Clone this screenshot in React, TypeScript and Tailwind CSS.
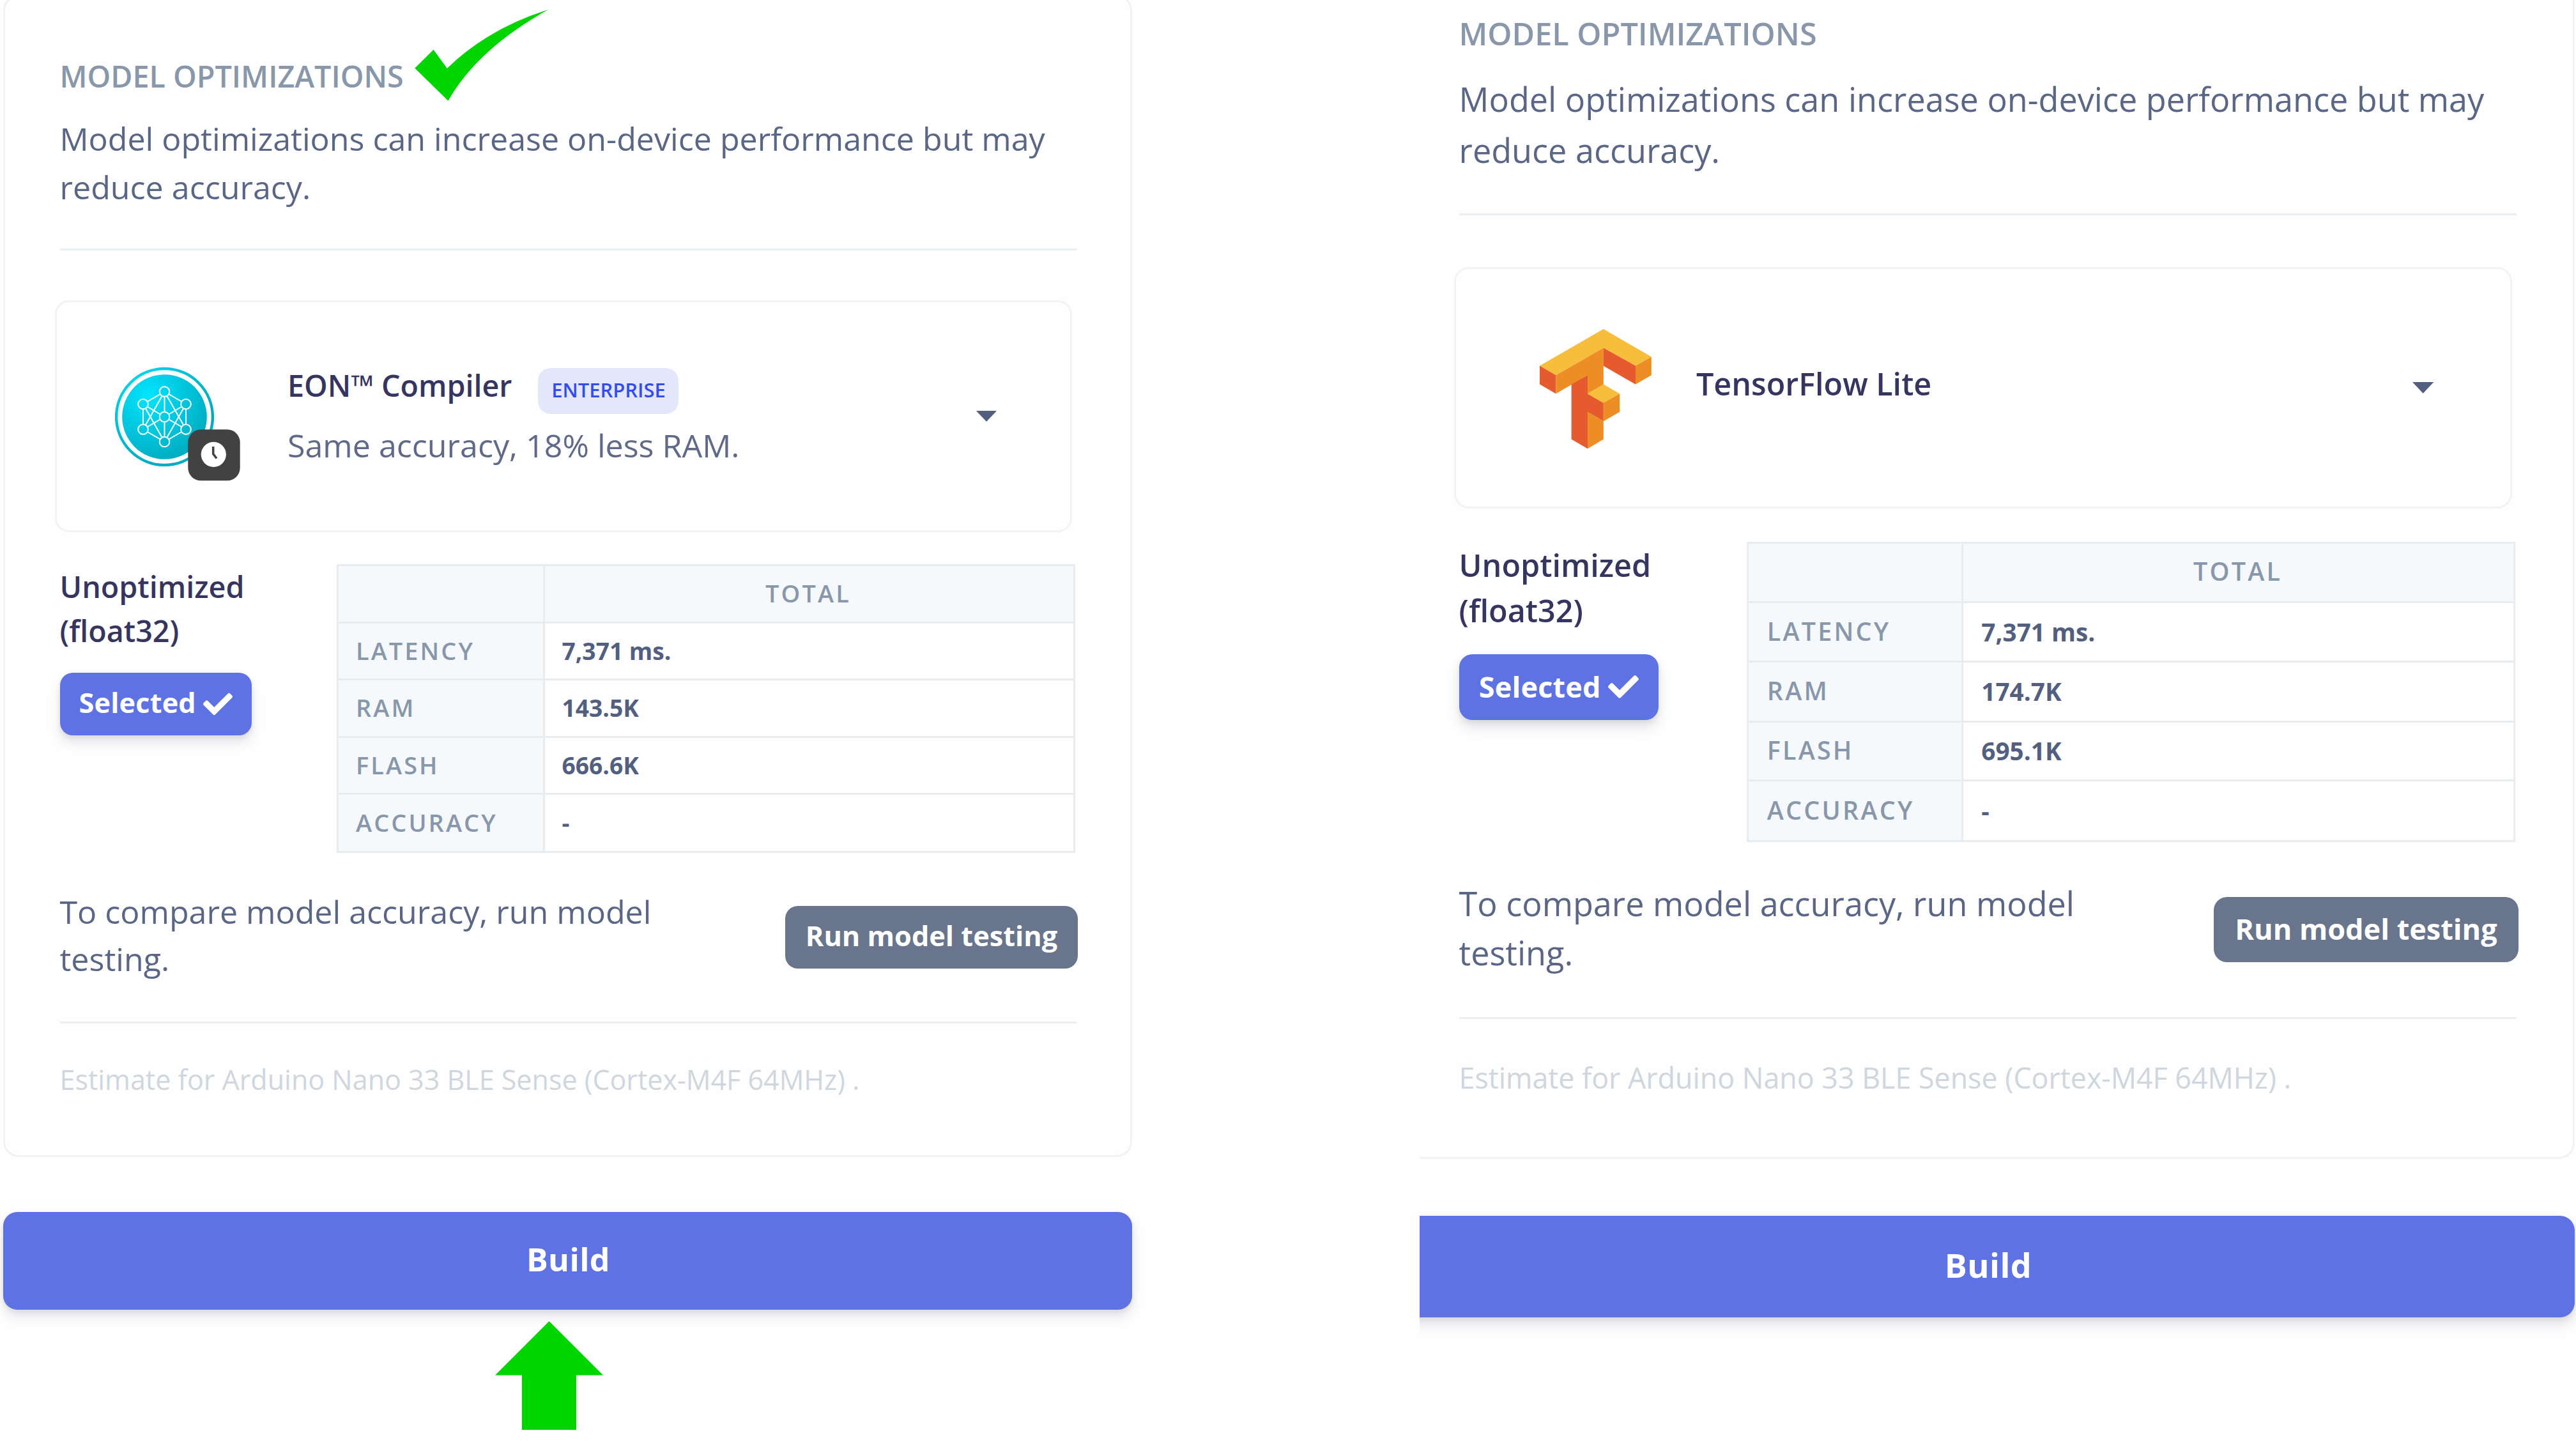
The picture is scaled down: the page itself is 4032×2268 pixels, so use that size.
import React from "react";
import { FaCheck } from "react-icons/fa";

type Row = [label: string, value: string, height: string];

function Check() {
  return (
    <svg className="absolute left-[649px] top-[23px] h-[143px] w-[210px]" viewBox="649 15 210 143">
      <path d="M858.2 15Q763 45 699.8 107L678.5 77.7L649.3 106.7L701.5 157.7Q747 77 858.2 15Z" fill="#00d500" />
    </svg>
  );
}

function EonIcon() {
  const nodes = [
    [77.5, 38],
    [111, 57.5],
    [111, 97],
    [77.5, 116.5],
    [44, 97],
    [44, 57.5],
    [77.5, 77.5],
  ];
  const links = [
    [0, 1], [1, 2], [2, 3], [3, 4], [4, 5], [5, 0],
    [0, 6], [1, 6], [2, 6], [3, 6], [4, 6], [5, 6],
    [0, 2], [0, 4], [3, 1], [3, 5],
  ];
  return (
    <svg className="h-[179px] w-[197px]" viewBox="0 0 197 179">
      <defs>
        <radialGradient id="eon" gradientUnits="userSpaceOnUse" cx="52" cy="45" r="105">
          <stop offset="0" stopColor="#00e5ff" />
          <stop offset="1" stopColor="#00acc1" />
        </radialGradient>
        <mask id="links">
          <rect width="197" height="179" fill="#fff" />
          {nodes.map(([x, y], i) => (
            <circle key={i} cx={x} cy={y} r="7.6" fill="#000" />
          ))}
        </mask>
      </defs>
      <circle cx="77.5" cy="77.5" r="75.4" fill="none" stroke="url(#eon)" strokeWidth="4.4" />
      <circle cx="77.5" cy="77.5" r="66.3" fill="url(#eon)" />
      <g stroke="#fff" strokeWidth="2" fill="none">
        <g mask="url(#links)">
          {links.map(([a, b], i) => (
            <line key={i} x1={nodes[a][0]} y1={nodes[a][1]} x2={nodes[b][0]} y2={nodes[b][1]} />
          ))}
        </g>
        {nodes.map(([x, y], i) => (
          <circle key={i} cx={x} cy={y} r="7.8" />
        ))}
      </g>
      <rect x="114.3" y="97.3" width="81.4" height="80" rx="20" fill="#424242" />
      <circle cx="154.3" cy="136.3" r="19.6" fill="#fff" />
      <path d="M153.7 124V135.5L159 142.5" fill="none" stroke="#424242" strokeWidth="3.6" />
    </svg>
  );
}

function TensorFlowIcon() {
  return (
    <svg className="h-[180px] w-[168px]" viewBox="0 0 303 560" preserveAspectRatio="none">
      <path fill="#f7be3c" d="M0 172L173 0L303 130L260 172L173 88L44 216Z" />
      <path fill="#e55b2d" d="M0 172L44 216V303L0 259Z" />
      <path fill="#ed8e24" d="M44 216L173 88V260L130 303V216L44 303Z" />
      <path fill="#e55b2d" d="M173 88L260 172V259L173 173Z" />
      <path fill="#ed8e24" d="M260 172L303 130V216L260 259Z" />
      <path fill="#e55b2d" d="M86 259L130 216V303L173 345V431L130 389V560L86 516Z" />
      <path fill="#f7be3c" d="M130 303L173 259L217 303L173 345Z" />
      <path fill="#ed8e24" d="M173 345L217 303V388L173 431Z" />
      <path fill="#ed8e24" d="M130 389L173 431V516L130 560Z" />
    </svg>
  );
}

function CompilerCard({ children }: { children: React.ReactNode }) {
  return (
    <div className="-ml-[7.5px] mt-[78px] flex h-[363px] w-[1591.5px] items-center rounded-[22px] border-[3px] border-[#f3f3f3] pr-[115px]">
      {children}
      <svg className="ml-auto h-[17px] w-[32px]" viewBox="0 0 32 17">
        <path d="M0 0H32L16 17Z" fill="#525f7f" />
      </svg>
    </div>
  );
}

function MetricsTable({ rows }: { rows: Row[] }) {
  return (
    <div className="w-[1156px] border-l-[3px] border-t-[3px] border-[#e9ecef] text-[37.9px]">
      <div className="flex h-[90px] font-semibold tracking-[3.1px] text-[#8898aa]">
        <div className="w-[323px] border-b-[3px] border-r-[3px] border-[#e9ecef] bg-[#f6f9fc]" />
        <div className="flex flex-1 items-center justify-center border-b-[3px] border-r-[3px] border-[#e9ecef] bg-[#f6f9fc] pb-[3px] pr-[2px]">
          TOTAL
        </div>
      </div>
      {rows.map(([label, value, height]) => (
        <div key={label} className={`flex ${height}`}>
          <div className="flex w-[323px] items-center border-b-[3px] border-r-[3px] border-[#e9ecef] bg-[#f6f9fc] pb-[2px] pl-[27.5px] font-semibold tracking-[3.1px] text-[#8898aa]">
            {label}
          </div>
          <div className="flex flex-1 items-center border-b-[3px] border-r-[3px] border-[#e9ecef] pb-[1px] pl-[27px] text-[37.2px] font-bold text-[#525f7f]">
            {value}
          </div>
        </div>
      ))}
    </div>
  );
}

function Panel({ card, rows, marked }: { card: React.ReactNode; rows: Row[]; marked?: boolean }) {
  return (
    <div className="relative w-[1780px] pl-[5px]">
      <div className="-mt-[8px] h-[1819px] w-[1767px] rounded-[24px] border-[3px] border-[#f2f2f2] pl-[85.5px] pt-[88.5px]">
        <h2 className="text-[46.7px] font-semibold leading-[70px] text-[#8898aa]">MODEL OPTIMIZATIONS</h2>
        <p className="mt-[25.4px] text-[50.15px] leading-[76.6px] text-[#5a6685]">
          Model optimizations can increase on-device performance but may
          <br />
          reduce accuracy.
        </p>
        <div className="mt-[57px] h-[3px] w-[1591px] bg-[#e9eef2]" />
        {card}
        <div className="mt-[50px] flex h-[452px] w-[1589px] items-start justify-between">
          <div>
            <div className="pt-[1px] text-[46.65px] font-semibold leading-[68.5px] text-[#35355f]">
              Unoptimized
              <br />
              (float32)
            </div>
            <button className="mt-[31.5px] flex h-[98.5px] w-[300px] items-center rounded-[20px] bg-[#5e72e4] pb-[2px] pl-[30px] text-left text-[43.2px] font-bold tracking-[0.2px] text-white shadow-[0_12px_17px_rgba(50,50,93,0.11),0_3px_9px_rgba(0,0,0,0.08)]">
              <span className="w-[194.5px]">Selected</span>
              <FaCheck className="mt-[2px] size-[46px]" />
            </button>
          </div>
          <MetricsTable rows={rows} />
        </div>
        <div className="mt-[54.5px] flex h-[148px] w-[1593.5px] items-start justify-between">
          <p className="text-[50.15px] leading-[74px] text-[#5a6685]">
            To compare model accuracy, run model
            <br />
            testing.
          </p>
          <button className="mt-[28px] flex h-[98px] w-[458px] items-center justify-center rounded-[20px] bg-[#68758c] pb-[2px] text-[43.3px] font-bold text-white">
            Run model testing
          </button>
        </div>
        <div className="mt-[61px] h-[3px] w-[1591px] bg-[#eceef1]" />
        <div className="mt-[56.5px] text-[43.03px] leading-[64px] text-[#d0d6dd]">
          Estimate for Arduino Nano 33 BLE Sense (Cortex-M4F 64MHz) .
        </div>
      </div>
      <button className="mt-[86px] flex h-[153px] w-[1767px] items-center justify-center rounded-[22px] bg-[#5e72e4] pb-[5px] pl-[2px] text-[50.2px] font-bold tracking-[0.4px] text-white shadow-[0_12px_17px_rgba(50,50,93,0.11),0_3px_9px_rgba(0,0,0,0.08)]">
        Build
      </button>
      {marked && (
        <>
          <svg className="ml-[770px] mt-[18px] h-[170px] w-[169px]" viewBox="0 0 169 170">
            <path d="M84.5 0L169 84.5H127V170H42V84.5H0Z" fill="#00d500" />
          </svg>
          <Check />
        </>
      )}
    </div>
  );
}

export default function App() {
  return (
    <div className="flex h-[2268px] w-[4032px] justify-between overflow-hidden bg-[#fefefe] font-['Open_Sans',sans-serif]">
      <div className="flow-root">
        <Panel
          marked
          rows={[
            ["LATENCY", "7,371 ms.", "h-[89px]"],
            ["RAM", "143.5K", "h-[90px]"],
            ["FLASH", "666.6K", "h-[89px]"],
            ["ACCURACY", "-", "h-[91px]"],
          ]}
          card={
            <CompilerCard>
              <div className="w-[361px] pl-[90.5px] pt-[26px]">
                <EonIcon />
              </div>
              <div className="pb-[2px]">
                <div className="flex h-[72px] items-start text-[46.6px] font-semibold leading-[72px] text-[#35355f]">
                  EON™ Compiler
                  <span className="ml-[41px] mt-[9px] h-[72px] w-[220px] rounded-[20px] bg-[#e4e7fb] text-center text-[30.95px] leading-[68px] text-[#324cf0]">
                    ENTERPRISE
                  </span>
                </div>
                <div className="mt-[20px] text-[50.15px] leading-[76px] text-[#5e6a88]">Same accuracy, 18% less RAM.</div>
              </div>
            </CompilerCard>
          }
        />
      </div>
      <div className="flow-root w-[1810px] overflow-hidden">
        <div className="-ml-[34.2px] -mt-[68.2px] flow-root [zoom:1.0406]">
          <Panel
            rows={[
              ["LATENCY", "7,371 ms.", "h-[89px]"],
              ["RAM", "174.7K", "h-[90px]"],
              ["FLASH", "695.1K", "h-[89px]"],
              ["ACCURACY", "-", "h-[91px]"],
            ]}
            card={
              <CompilerCard>
                <div className="w-[361.5px] pl-[126.5px] pt-[3px]">
                  <TensorFlowIcon />
                </div>
                <div className="pb-[12px] text-[46.6px] font-semibold leading-[72px] text-[#35355f]">TensorFlow Lite</div>
              </CompilerCard>
            }
          />
        </div>
      </div>
    </div>
  );
}
